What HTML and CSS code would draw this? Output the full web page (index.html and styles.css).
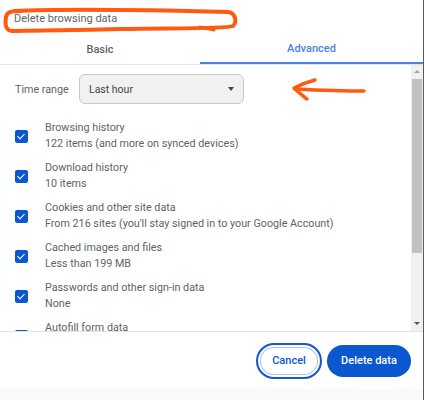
FILE: index.html
```html
<!DOCTYPE html>
<html lang="en">
<head>
<meta charset="utf-8">
<title>Delete browsing data</title>
<link rel="stylesheet" href="styles.css">
</head>
<body>
<div class="dialog">
  <div class="header">
    <h1 class="title">Delete browsing data</h1>
    <svg class="oval" width="240" height="40" viewBox="0 0 240 40" aria-hidden="true">
      <path d="M14 11 C60 9 150 10 228 12 C236 13 237 22 233 26 C225 29 180 28 120 29 C80 30 30 31 12 31 C5 30 5 24 6 17 C7 12 10 11 22 11" fill="none" stroke="#ff5a0f" stroke-width="4" stroke-linecap="round"/>
      <path d="M200 27 L214 30" fill="none" stroke="#ff5a0f" stroke-width="3" stroke-linecap="round"/>
    </svg>
  </div>
  <div class="tabs">
    <div class="tab">Basic</div>
    <div class="tab tab-active">Advanced</div>
  </div>
  <div class="body">
    <div class="list">
      <div class="range-row">
        <span class="range-label">Time range</span>
        <div class="select">
          <span>Last hour</span>
          <span class="caret"></span>
        </div>
        <svg class="arrow" width="80" height="26" viewBox="0 0 80 26" aria-hidden="true">
          <path d="M24 3 C16 5 9 8 3 11 C7 15 11 18 16 22" fill="none" stroke="#ff5a0f" stroke-width="3.5" stroke-linecap="round" stroke-linejoin="round"/>
          <path d="M4 12 C25 13 50 14 73 14" fill="none" stroke="#ff5a0f" stroke-width="3.5" stroke-linecap="round"/>
        </svg>
      </div>
      <div class="item">
        <span class="check"></span>
        <div class="item-text"><div>Browsing history</div><div>122 items (and more on synced devices)</div></div>
      </div>
      <div class="item">
        <span class="check"></span>
        <div class="item-text"><div>Download history</div><div>10 items</div></div>
      </div>
      <div class="item">
        <span class="check"></span>
        <div class="item-text"><div>Cookies and other site data</div><div>From 216 sites (you'll stay signed in to your Google Account)</div></div>
      </div>
      <div class="item">
        <span class="check"></span>
        <div class="item-text"><div>Cached images and files</div><div>Less than 199 MB</div></div>
      </div>
      <div class="item">
        <span class="check"></span>
        <div class="item-text"><div>Passwords and other sign-in data</div><div>None</div></div>
      </div>
      <div class="item">
        <span class="check"></span>
        <div class="item-text"><div>Autofill form data</div><div>&nbsp;</div></div>
      </div>
    </div>
    <div class="scrollbar">
      <span class="sb-up"></span>
      <div class="sb-track"><div class="sb-thumb"></div></div>
      <span class="sb-down"></span>
    </div>
  </div>
  <div class="footer">
    <button class="btn btn-cancel">Cancel</button>
    <button class="btn btn-primary">Delete data</button>
  </div>
  <div class="bottom-band"></div>
</div>
</body>
</html>
```
FILE: styles.css
```css
* { box-sizing: border-box; }
html, body { margin: 0; padding: 0; background: #fff; }
body {
  width: 425px;
  height: 400px;
  overflow: hidden;
  font-family: Roboto, "Open Sans", sans-serif;
  color: #5f6368;
}
.dialog {
  width: 424px;
  height: 400px;
  border-right: 1px solid #5a5a5a;
  display: flex;
  flex-direction: column;
  position: relative;
}
.header {
  height: 33px;
  padding: 10px 0 0 14px;
  position: relative;
}
.title {
  margin: 0;
  font-size: 11px;
  font-weight: 400;
  line-height: 18px;
  color: #5f6368;
}
.oval { position: absolute; left: 0; top: 0; }
.tabs {
  display: flex;
  height: 32px;
  border-bottom: 1px solid #e3e3e3;
}
.tab {
  flex: 1;
  display: flex;
  align-items: center;
  justify-content: center;
  font-size: 11px;
  font-weight: 500;
  color: #5f6368;
  padding-top: 1px;
}
.tab-active {
  color: #4a80e8;
  border-bottom: 2px solid #4a80e8;
  flex: 0 0 223px;
}
.body {
  display: flex;
  height: 267px;
  border-bottom: 1px solid #e3e3e3;
}
.list {
  flex: 1;
  overflow: hidden;
  padding: 9px 0 0 15px;
}
.range-row {
  display: flex;
  align-items: center;
  height: 30px;
  gap: 10px;
  position: relative;
}
.range-label { font-size: 10.75px; width: 54px; white-space: nowrap; color: #5f6368; }
.select {
  width: 165px;
  height: 30px;
  border: 1px solid #c8c8c8;
  border-radius: 6px;
  background: #f1f1f1;
  display: flex;
  align-items: center;
  justify-content: space-between;
  padding: 0 9px 0 9px;
  font-size: 10.5px;
  color: #444;
}
.caret {
  width: 0; height: 0;
  border-left: 3.5px solid transparent;
  border-right: 3.5px solid transparent;
  border-top: 4px solid #444;
}
.arrow { position: absolute; left: 276px; top: 3px; }
.item {
  display: flex;
  align-items: center;
  height: 40px;
}
.range-row + .item { margin-top: 12px; }
.check {
  width: 13px;
  height: 13px;
  background: #0b57d0;
  border-radius: 2px;
  flex: 0 0 13px;
  position: relative;
}
.check::after {
  content: "";
  position: absolute;
  left: 4px; top: 2px;
  width: 3px; height: 6px;
  border-right: 1.5px solid #fff;
  border-bottom: 1.5px solid #fff;
  transform: rotate(45deg);
}
.item-text {
  margin-left: 17px;
  font-size: 10.75px;
  line-height: 16px;
  color: #5f6368;
}
.scrollbar {
  flex: 0 0 12px;
  width: 12px;
  background: #f1f1f1;
  display: flex;
  flex-direction: column;
  align-items: center;
}
.sb-up, .sb-down {
  width: 0; height: 0;
  border-left: 3px solid transparent;
  border-right: 3px solid transparent;
}
.sb-up { border-bottom: 3px solid #a3a3a3; margin-top: 5px; flex: 0 0 3px; margin-bottom: 6px; }
.sb-down { border-top: 3px solid #505050; flex: 0 0 3px; margin-top: 4px; margin-bottom: 6px; }
.sb-track { flex: 1; width: 100%; padding: 0 1px; }
.sb-thumb { height: 174px; background: #c1c1c1; }
.footer {
  height: 57px;
  display: flex;
  justify-content: flex-end;
  align-items: center;
  gap: 5px;
  padding-right: 12px;
}
.btn {
  font-family: Roboto, "Open Sans", sans-serif;
  font-size: 11px;
  font-weight: 500;
  height: 32px;
  border-radius: 16px;
  cursor: pointer;
}
.btn-cancel {
  width: 66px;
  height: 36px;
  border-radius: 18px;
  background: #fff;
  color: #0b57d0;
  border: 2px solid #1a56c8;
  box-shadow: inset 0 0 0 2px #fff, inset 0 0 0 3px #a8c4f0;
}
.btn-primary {
  width: 84px;
  background: #0b57d0;
  color: #fff;
  border: none;
}
.bottom-band { flex: 1; background: #f8f9fa; }
```
